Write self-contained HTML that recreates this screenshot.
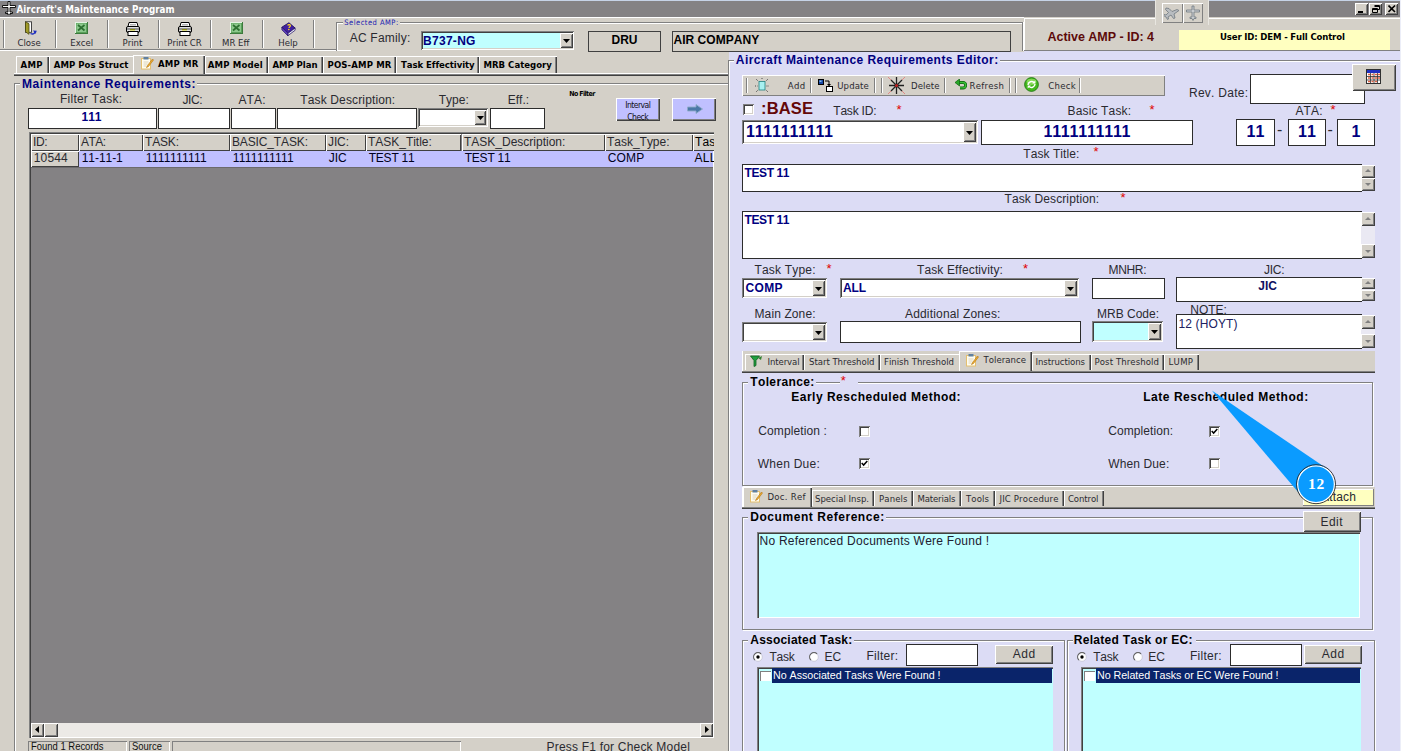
<!DOCTYPE html>
<html><head><meta charset="utf-8"><title>Aircraft's Maintenance Program</title>
<style>
html,body{margin:0;padding:0}
body{width:1401px;height:753px;position:relative;overflow:hidden;background:#d4d0c8;font-family:"Liberation Sans",sans-serif;font-size:12px;color:#000;font-kerning:none}
body div,body span,body svg{position:absolute;box-sizing:border-box}
.t{white-space:pre;font-family:"Liberation Sans",sans-serif}
.d{font-family:"DejaVu Sans Condensed","DejaVu Sans","Liberation Sans",sans-serif}
.grp{border:1px solid #808080;box-shadow:inset 1px 1px #fff,1px 1px #fff}
.sunk{box-shadow:inset 1px 1px #808080,inset -1px -1px #fff,inset 2px 2px #404040,inset -2px -2px #d4d0c8;background:#fff}
.rais{box-shadow:inset 1px 1px #fff,inset -1px -1px #404040,inset 2px 2px #d4d0c8,inset -2px -2px #808080;background:#d4d0c8}
.rais1{box-shadow:inset 1px 1px #fff,inset -1px -1px #808080;background:#d4d0c8}
.sunk1{box-shadow:inset 1px 1px #808080,inset -1px -1px #fff}
.flat{border:1px solid #2c2c2c;background:#fff}
.tab{background:#d4d0c8;box-shadow:inset 1px 1px #fff,inset -1px 0 #404040,inset -2px 0 #808080}
</style></head><body>
<div style="left:0px;top:0px;width:1401px;height:17px;background:#848284"></div>
<div style="left:0px;top:0px;width:1401px;height:1px;background:#c6d3e7"></div>
<svg style="left:2px;top:1px" width="14" height="14" viewBox="0 0 14 14"><path d="M6 0.5h2v4h5.5v2H8v4.5h2.5v1.5H8V14H6v-1.5H3.5V11H6V6.5H0.5v-2H6z" fill="#fff" stroke="#000" stroke-width="0.9"/></svg>
<span class="t d" style="left:16.5px;letter-spacing:0.05px;top:4.5px;font-size:9.7px;line-height:9.7px;font-weight:bold;color:#fff;">Aircraft's Maintenance Program</span>
<div style="left:0px;top:17px;width:1024px;height:1px;background:#fff"></div>
<div style="left:0px;top:49px;width:337px;height:1px;background:#808080"></div>
<div style="left:0px;top:50px;width:351px;height:1px;background:#fff"></div>
<div style="left:3px;top:20px;width:1px;height:28px;background:#808080"></div>
<div style="left:4px;top:20px;width:1px;height:28px;background:#fff"></div>
<div style="left:55px;top:20px;width:1px;height:28px;background:#808080"></div>
<div style="left:56px;top:20px;width:1px;height:28px;background:#fff"></div>
<div style="left:107px;top:20px;width:1px;height:28px;background:#808080"></div>
<div style="left:108px;top:20px;width:1px;height:28px;background:#fff"></div>
<div style="left:158px;top:20px;width:1px;height:28px;background:#808080"></div>
<div style="left:159px;top:20px;width:1px;height:28px;background:#fff"></div>
<div style="left:210px;top:20px;width:1px;height:28px;background:#808080"></div>
<div style="left:211px;top:20px;width:1px;height:28px;background:#fff"></div>
<div style="left:262px;top:20px;width:1px;height:28px;background:#808080"></div>
<div style="left:263px;top:20px;width:1px;height:28px;background:#fff"></div>
<div style="left:313px;top:20px;width:1px;height:28px;background:#808080"></div>
<div style="left:314px;top:20px;width:1px;height:28px;background:#fff"></div>
<span class="t d" style="left:17.5px;top:38.25px;font-size:9.5px;line-height:9.5px;color:#2a2a30;">Close</span>
<span class="t d" style="left:70.25px;top:38.25px;font-size:9.5px;line-height:9.5px;color:#2a2a30;">Excel</span>
<span class="t d" style="left:122.5px;top:38.25px;font-size:9.5px;line-height:9.5px;color:#2a2a30;">Print</span>
<span class="t d" style="left:167.25px;top:38.25px;font-size:9.5px;line-height:9.5px;color:#2a2a30;">Print CR</span>
<span class="t d" style="left:222.0px;top:38.25px;font-size:9.5px;line-height:9.5px;color:#2a2a30;">MR Eff</span>
<span class="t d" style="left:278.25px;top:38.25px;font-size:9.5px;line-height:9.5px;color:#2a2a30;">Help</span>
<svg style="left:23px;top:21px" width="15" height="16" viewBox="0 0 15 16"><rect x="2.500" y="0.800" width="6" height="10.500" fill="#fff" stroke="#303030" stroke-width="0.900"/><path d="M2.500 0.800l3.500 2v10.500l-3.500-2.500z" fill="#a09a28" stroke="#4a4810" stroke-width="0.800"/><path d="M7.500 12.500q3.500 1.500 4.500-1.500" stroke="#2030c0" stroke-width="1.300" fill="none"/><path d="M10 9.500l3.800 .3-1.300 3.200z" fill="#2030c0"/></svg>
<svg style="left:75px;top:22px" width="13" height="12" viewBox="0 0 13 12"><rect x="0" y="0" width="13" height="12" fill="#3c7a3c"/><rect x="0" y="0" width="12" height="11" fill="#e4f4e4"/><rect x="1" y="1" width="11" height="10" fill="#5aa05a"/><rect x="1.500" y="1.500" width="9.500" height="8.500" fill="#8cc88c"/><path d="M3 3l6.500 5.500M9.500 3L3 8.500" stroke="#2c7030" stroke-width="1.700"/></svg>
<svg style="left:230px;top:22px" width="13" height="12" viewBox="0 0 13 12"><rect x="0" y="0" width="13" height="12" fill="#3c7a3c"/><rect x="0" y="0" width="12" height="11" fill="#e4f4e4"/><rect x="1" y="1" width="11" height="10" fill="#5aa05a"/><rect x="1.500" y="1.500" width="9.500" height="8.500" fill="#8cc88c"/><path d="M3 3l6.500 5.500M9.500 3L3 8.500" stroke="#2c7030" stroke-width="1.700"/></svg>
<svg style="left:125px;top:21px" width="16" height="16" viewBox="0 0 16 16"><path d="M4 1.500h8l1 4H3z" fill="#fff" stroke="#000"/><path d="M5 3.500h6M5 5h6" stroke="#808080" stroke-width="0.600"/><rect x="1.500" y="5.500" width="13" height="6" rx="1.500" fill="#e0e0e0" stroke="#000"/><rect x="3" y="10.500" width="10" height="4" fill="#fff" stroke="#000"/><rect x="5" y="8" width="5" height="1.500" fill="#d8d820"/><path d="M2 8h12" stroke="#000" stroke-width="0.700"/></svg>
<svg style="left:177px;top:21px" width="16" height="16" viewBox="0 0 16 16"><path d="M4 1.500h8l1 4H3z" fill="#fff" stroke="#000"/><path d="M5 3.500h6M5 5h6" stroke="#808080" stroke-width="0.600"/><rect x="1.500" y="5.500" width="13" height="6" rx="1.500" fill="#e0e0e0" stroke="#000"/><rect x="3" y="10.500" width="10" height="4" fill="#fff" stroke="#000"/><rect x="5" y="8" width="5" height="1.500" fill="#d8d820"/><path d="M2 8h12" stroke="#000" stroke-width="0.700"/></svg>
<svg style="left:280.500px;top:21px" width="15" height="15" viewBox="0 0 17 17"><path d="M1 7l8-5 7 6-8 6z" fill="#4020a0" stroke="#201060"/><path d="M1 7v3l7 7v-3z" fill="#6040c0" stroke="#201060" stroke-width="0.800"/><path d="M8 14l8-6v2.500l-8 6z" fill="#e8e8f8" stroke="#201060" stroke-width="0.800"/><path d="M7.500 5c1-1.500 3.500-1 3 .8-.3 1-1.300 1-1.500 2" stroke="#ffd820" stroke-width="1.400" fill="none"/><circle cx="8.800" cy="9.600" r="0.900" fill="#ffd820"/></svg>
<div style="left:336px;top:22px;width:1px;height:29px;background:#808080"></div>
<div style="left:337px;top:23px;width:1px;height:27px;background:#fff"></div>
<div style="left:336px;top:22px;width:688px;height:1px;background:#808080"></div>
<div style="left:337px;top:23px;width:686px;height:1px;background:#fff"></div>
<div style="left:1022px;top:22px;width:1px;height:29px;background:#808080"></div>
<div style="left:1023px;top:22px;width:1px;height:29px;background:#fff"></div>
<div style="left:343px;top:19px;width:57px;height:8px;background:#d4d0c8"></div>
<span class="t d" style="left:344.25px;letter-spacing:0.48px;top:19.25px;font-size:7.5px;line-height:7.5px;color:#1818b0;">Selected AMP:</span>
<span class="t" style="left:349.75px;letter-spacing:0.2px;top:31.75px;font-size:12px;line-height:12px;color:#2a2a30;">AC Family:</span>
<div class="sunk" style="left:421px;top:31px;width:153px;height:19px;background:#c0ffff"></div>
<span class="t" style="left:423.0px;letter-spacing:0.29px;top:34.5px;font-size:12px;line-height:12px;font-weight:bold;color:#000080;">B737-NG</span>
<div class="rais" style="left:560px;top:33px;width:13px;height:15px;"></div>
<svg style="left:563px;top:39px" width="7" height="4" viewBox="0 0 7 4"><path d="M0 0h7L3.500 4z" fill="#000"/></svg>
<div style="left:588px;top:31px;width:73px;height:21px;border:1px solid #404040;background:#d4d0c8"></div>
<span class="t" style="left:611.5px;top:33.5px;font-size:12px;line-height:12px;font-weight:bold;">DRU</span>
<div style="left:672px;top:31px;width:339px;height:21px;border:1px solid #404040;background:#d4d0c8"></div>
<span class="t" style="left:673.5px;letter-spacing:0.03px;top:33.5px;font-size:12px;line-height:12px;font-weight:bold;">AIR COMPANY</span>
<div style="left:1024px;top:18px;width:1px;height:32px;background:#fff"></div>
<div style="left:1024px;top:18px;width:377px;height:1px;background:#fff"></div>
<div style="left:1024px;top:50px;width:377px;height:1px;background:#808080"></div>
<span class="t" style="left:1047.5px;letter-spacing:-0.03px;top:30.75px;font-size:12.5px;line-height:12.5px;font-weight:bold;color:#5c0a0a;">Active AMP - ID: 4</span>
<div style="left:1179px;top:30px;width:211px;height:20px;background:#ffffc0"></div>
<span class="t d" style="left:1220.0px;letter-spacing:-0.15px;top:31.75px;font-size:9.5px;line-height:9.5px;font-weight:bold;">User ID: DEM - Full Control</span>
<div style="left:1155px;top:0px;width:54px;height:25px;background:#d4d0c8;box-shadow:inset 1px 0 #e8e6e0,inset -1px 0 #e8e6e0"></div>
<div class="rais1" style="left:1162px;top:3px;width:21px;height:20px;"></div>
<div class="rais1" style="left:1183px;top:3px;width:20px;height:20px;"></div>
<svg style="left:1164px;top:5px" width="17" height="16" viewBox="0 0 17 16"><path d="M2 3l3 .5 3 3 5-2 2 1-5 3.5 1 4-1.5.5-2.5-3.5-3 2 .5 2-1 .5-1.5-2.500-2.500-1.500.5-1 2 .5 2.500-2.500-3-3z" fill="#b8bcc0" stroke="#707880" stroke-width="0.8"/></svg>
<svg style="left:1185px;top:5px" width="16" height="16" viewBox="0 0 16 16"><path d="M7 1h2v4h5.5v2H9v5h2v1.500H9l-1 2-1-2H5V12h2V7H1.5V5H7z" fill="#c8ccd0" stroke="#707880" stroke-width="0.8"/></svg>
<div class="rais" style="left:1355px;top:3px;width:13px;height:12px;"></div>
<div class="rais" style="left:1369px;top:3px;width:13px;height:12px;"></div>
<div class="rais" style="left:1385px;top:3px;width:13px;height:12px;"></div>
<div style="left:1358px;top:11px;width:5px;height:2px;background:#000"></div>
<svg style="left:1371px;top:4px" width="10" height="10" viewBox="0 0 10 10"><path d="M3.5 1.500h5v4h-1.500M3.500 2.500h5" stroke="#000" fill="none"/><path d="M1.500 4.500h5v4h-5zM1.500 5.500h5" stroke="#000" fill="none"/></svg>
<svg style="left:1388px;top:5px" width="8" height="8" viewBox="0 0 8 8"><path d="M0.500 0.500l6.500 6.500M7 0.500L0.500 7" stroke="#000" stroke-width="1.600" fill="none"/></svg>
<div style="left:14px;top:73px;width:715px;height:1px;background:#fff"></div>
<div style="left:14px;top:74px;width:715px;height:1px;background:#808080"></div>
<div style="left:14px;top:75px;width:715px;height:1px;background:#404040"></div>
<div class="tab" style="left:16px;top:56px;width:33px;height:17px;"></div>
<span class="t d" style="left:20.5px;letter-spacing:0.3px;top:60.0px;font-size:9.5px;line-height:9.5px;font-weight:bold;">AMP</span>
<div class="tab" style="left:49px;top:56px;width:84px;height:17px;"></div>
<span class="t d" style="left:53.75px;letter-spacing:0.03px;top:60.0px;font-size:9.5px;line-height:9.5px;font-weight:bold;">AMP Pos Struct</span>
<div class="tab" style="left:205px;top:56px;width:63px;height:17px;"></div>
<span class="t d" style="left:207.75px;letter-spacing:0.16px;top:60.0px;font-size:9.5px;line-height:9.5px;font-weight:bold;">AMP Model</span>
<div class="tab" style="left:268px;top:56px;width:55px;height:17px;"></div>
<span class="t d" style="left:272.5px;letter-spacing:-0.06px;top:60.0px;font-size:9.5px;line-height:9.5px;font-weight:bold;">AMP Plan</span>
<div class="tab" style="left:323px;top:56px;width:73px;height:17px;"></div>
<span class="t d" style="left:327.5px;letter-spacing:0.13px;top:60.0px;font-size:9.5px;line-height:9.5px;font-weight:bold;">POS-AMP MR</span>
<div class="tab" style="left:396px;top:56px;width:83px;height:17px;"></div>
<span class="t d" style="left:401.0px;letter-spacing:-0.07px;top:60.0px;font-size:9.5px;line-height:9.5px;font-weight:bold;">Task Effectivity</span>
<div class="tab" style="left:479px;top:56px;width:78px;height:17px;"></div>
<span class="t d" style="left:483.5px;letter-spacing:0.01px;top:60.0px;font-size:9.5px;line-height:9.5px;font-weight:bold;">MRB Category</span>
<div style="left:131px;top:57px;width:2px;height:16px;background:#d4d0c8"></div>
<div class="tab" style="left:133px;top:55px;width:72px;height:19px;"></div>
<span class="t d" style="left:158.0px;letter-spacing:0.17px;top:58.5px;font-size:9.5px;line-height:9.5px;font-weight:bold;">AMP MR</span>
<div style="left:134px;top:73px;width:69px;height:1px;background:#d4d0c8"></div>
<svg style="left:140px;top:55.5px" width="14" height="14" viewBox="0 0 14 14"><rect x="1.500" y="2.500" width="9" height="10.500" fill="#fffdf0" stroke="#e4c070"/><rect x="3.500" y="1" width="5" height="2.500" fill="#6080a0"/><path d="M3.500 6h5M3.500 8h4M3.500 10h3" stroke="#d0c8b0" stroke-width="0.800"/><path d="M12.500 3l-5 6.500-1 2 2-1 5-6.500z" fill="#f0b030" stroke="#b07010" stroke-width="0.600"/></svg>
<div class="grp" style="left:14px;top:83px;width:715px;height:700px;"></div>
<div style="left:20px;top:78px;width:177px;height:12px;background:#d4d0c8"></div>
<span class="t" style="left:22.0px;letter-spacing:0.56px;top:77.5px;font-size:12px;line-height:12px;font-weight:bold;color:#000080;">Maintenance Requirements:</span>
<span class="t" style="left:60.0px;letter-spacing:0.24px;top:92.75px;font-size:12px;line-height:12px;color:#2a2a30;">Filter Task:</span>
<span class="t" style="left:182.5px;letter-spacing:-0.45px;top:94.25px;font-size:12px;line-height:12px;color:#2a2a30;">JIC:</span>
<span class="t" style="left:238.5px;letter-spacing:0.11px;top:94.25px;font-size:12px;line-height:12px;color:#2a2a30;">ATA:</span>
<span class="t" style="left:300.25px;letter-spacing:0.14px;top:94.25px;font-size:12px;line-height:12px;color:#2a2a30;">Task Description:</span>
<span class="t" style="left:438.75px;top:94.25px;font-size:12px;line-height:12px;color:#2a2a30;">Type:</span>
<span class="t" style="left:507.75px;letter-spacing:-0.01px;top:94.25px;font-size:12px;line-height:12px;color:#2a2a30;">Eff.:</span>
<div class="flat" style="left:28px;top:108px;width:129px;height:21px;"></div>
<span class="t" style="left:81.5px;top:110.5px;font-size:12px;line-height:12px;font-weight:bold;color:#000080;">111</span>
<div class="flat" style="left:158px;top:108px;width:72px;height:21px;"></div>
<div class="flat" style="left:231px;top:108px;width:45px;height:21px;"></div>
<div class="flat" style="left:277px;top:108px;width:140px;height:21px;"></div>
<div class="sunk" style="left:418px;top:108px;width:70px;height:19px;"></div>
<div class="rais" style="left:474px;top:110px;width:12px;height:15px;"></div>
<svg style="left:477px;top:116px" width="7" height="4" viewBox="0 0 7 4"><path d="M0 0h7L3.500 4z" fill="#000"/></svg>
<div class="flat" style="left:490px;top:108px;width:55px;height:21px;"></div>
<span class="t d" style="left:569.25px;letter-spacing:-0.6px;top:90.5px;font-size:7px;line-height:7px;font-weight:bold;">No Filter</span>
<div style="left:616px;top:98px;width:44px;height:23px;background:#c0c0ff;box-shadow:inset 1px 1px #fff,inset -1px -1px #404040,inset -2px -2px #808080"></div>
<span class="t d" style="left:625.25px;letter-spacing:-0.54px;top:101.25px;font-size:8.5px;line-height:8.5px;color:#101018;">Interval</span>
<span class="t d" style="left:627.25px;letter-spacing:-0.51px;top:112.5px;font-size:8.5px;line-height:8.5px;color:#101018;">Check</span>
<div style="left:672px;top:98px;width:44px;height:23px;background:#c0c0ff;box-shadow:inset 1px 1px #fff,inset -1px -1px #404040,inset -2px -2px #808080"></div>
<svg style="left:687px;top:104px" width="16" height="10" viewBox="0 0 16 10"><path d="M0.500 3h8.500V0.500l6.500 4.500-6.500 4.500V7H0.500z" fill="#4c78a8" stroke="#90acc8" stroke-width="0.900"/></svg>
<div style="left:29px;top:132px;width:685px;height:606px;background:#848284;box-shadow:inset 1px 1px #808080,inset 2px 2px #404040,inset -1px -1px #fff"></div>
<div style="left:31px;top:134px;width:48px;height:17px;background:#d4d0c8;box-shadow:inset 1px 1px #fff,inset -1px -1px #404040;"></div>
<div style="left:31px;top:151px;width:48px;height:16px;background:#d4d0c8;box-shadow:inset 1px 1px #fff,inset -1px -1px #404040"></div>
<div style="left:79px;top:134px;width:64px;height:17px;background:#d4d0c8;box-shadow:inset 1px 1px #fff,inset -1px -1px #404040;"></div>
<div style="left:79px;top:151px;width:65px;height:16px;background:#c0c0ff;"></div>
<div style="left:143px;top:134px;width:87px;height:17px;background:#d4d0c8;box-shadow:inset 1px 1px #fff,inset -1px -1px #404040;"></div>
<div style="left:143px;top:151px;width:88px;height:16px;background:#c0c0ff;"></div>
<div style="left:230px;top:134px;width:96px;height:17px;background:#d4d0c8;box-shadow:inset 1px 1px #fff,inset -1px -1px #404040;"></div>
<div style="left:230px;top:151px;width:97px;height:16px;background:#c0c0ff;"></div>
<div style="left:326px;top:134px;width:40px;height:17px;background:#d4d0c8;box-shadow:inset 1px 1px #fff,inset -1px -1px #404040;"></div>
<div style="left:326px;top:151px;width:41px;height:16px;background:#c0c0ff;"></div>
<div style="left:366px;top:134px;width:95px;height:17px;background:#d4d0c8;box-shadow:inset 1px 1px #fff,inset -1px -1px #404040;"></div>
<div style="left:366px;top:151px;width:96px;height:16px;background:#c0c0ff;"></div>
<div style="left:462px;top:134px;width:143px;height:17px;background:#d4d0c8;box-shadow:inset 1px 1px #fff,inset -1px -1px #404040;"></div>
<div style="left:462px;top:151px;width:144px;height:16px;background:#c0c0ff;"></div>
<div style="left:605px;top:134px;width:88px;height:17px;background:#d4d0c8;box-shadow:inset 1px 1px #fff,inset -1px -1px #404040;"></div>
<div style="left:605px;top:151px;width:89px;height:16px;background:#c0c0ff;"></div>
<div style="left:693px;top:134px;width:21px;height:17px;background:#d4d0c8;box-shadow:inset 1px 1px #fff,inset 0 -1px #404040;overflow:hidden;"></div>
<div style="left:693px;top:151px;width:20px;height:16px;background:#c0c0ff;"></div>
<span class="t" style="left:33.0px;letter-spacing:-0.42px;top:135.75px;font-size:12px;line-height:12px;color:#2a2a30;">ID:</span>
<span class="t" style="left:33.75px;letter-spacing:0.16px;top:152.0px;font-size:12px;line-height:12px;color:#2a2a30;">10544</span>
<span class="t" style="left:81.0px;letter-spacing:-0.56px;top:135.75px;font-size:12px;line-height:12px;color:#2a2a30;">ATA:</span>
<span class="t" style="left:81.75px;letter-spacing:-0.06px;top:152.0px;font-size:12px;line-height:12px;color:#000020;">11-11-1</span>
<span class="t" style="left:145.0px;letter-spacing:-0.17px;top:135.75px;font-size:12px;line-height:12px;color:#2a2a30;">TASK:</span>
<span class="t" style="left:145.75px;letter-spacing:-0.64px;top:152.0px;font-size:12px;line-height:12px;color:#000020;">1111111111</span>
<span class="t" style="left:232.0px;letter-spacing:-0.14px;top:135.75px;font-size:12px;line-height:12px;color:#2a2a30;">BASIC_TASK:</span>
<span class="t" style="left:232.75px;letter-spacing:-0.64px;top:152.0px;font-size:12px;line-height:12px;color:#000020;">1111111111</span>
<span class="t" style="left:328.0px;letter-spacing:-0.11px;top:135.75px;font-size:12px;line-height:12px;color:#2a2a30;">JIC:</span>
<span class="t" style="left:328.75px;top:152.0px;font-size:12px;line-height:12px;color:#000020;">JIC</span>
<span class="t" style="left:368.0px;letter-spacing:-0.02px;top:135.75px;font-size:12px;line-height:12px;color:#2a2a30;">TASK_Title:</span>
<span class="t" style="left:368.75px;letter-spacing:-0.23px;top:152.0px;font-size:12px;line-height:12px;color:#000020;">TEST 11</span>
<span class="t" style="left:464.0px;top:135.75px;font-size:12px;line-height:12px;color:#2a2a30;">TASK_Description:</span>
<span class="t" style="left:464.75px;letter-spacing:-0.23px;top:152.0px;font-size:12px;line-height:12px;color:#000020;">TEST 11</span>
<span class="t" style="left:607.0px;letter-spacing:-0.02px;top:135.75px;font-size:12px;line-height:12px;color:#2a2a30;">Task_Type:</span>
<span class="t" style="left:607.75px;letter-spacing:0.17px;top:152.0px;font-size:12px;line-height:12px;color:#000020;">COMP</span>
<div style="left:693px;top:134px;width:21px;height:33px;overflow:hidden;background:none"><span class="t" style="left:2px;top:1.850px;font-size:12px;line-height:12px;letter-spacing:0.1px">Task</span><span class="t" style="left:1.500px;top:18.100px;font-size:12px;line-height:12px;letter-spacing:0.3px">ALL</span></div>
<div style="left:31px;top:167px;width:682px;height:1px;background:#6c6a6c"></div>
<div style="left:31px;top:723px;width:682px;height:14px;background:#eceae6"></div>
<div class="rais" style="left:31px;top:723px;width:13px;height:14px;"></div>
<div class="rais" style="left:44px;top:723px;width:14px;height:14px;"></div>
<div class="rais" style="left:700px;top:723px;width:13px;height:14px;"></div>
<svg style="left:35px;top:726px" width="4" height="7" viewBox="0 0 4 7"><path d="M4 0v7L0 3.500z" fill="#000"/></svg>
<svg style="left:705px;top:726px" width="4" height="7" viewBox="0 0 4 7"><path d="M0 0v7l4-3.500z" fill="#000"/></svg>
<div class="sunk1" style="left:28px;top:741px;width:99px;height:14px;"></div>
<div class="sunk1" style="left:129px;top:741px;width:41px;height:14px;"></div>
<div class="sunk1" style="left:172px;top:741px;width:289px;height:14px;"></div>
<span class="t" style="left:30.5px;top:741.0px;font-size:10.5px;line-height:10.5px;color:#2a2a30;transform:scaleX(.9);transform-origin:0 0;color:#101010;">Found 1 Records</span>
<span class="t" style="left:132.0px;top:741.0px;font-size:10.5px;line-height:10.5px;color:#2a2a30;transform:scaleX(.9);transform-origin:0 0;color:#101010;">Source</span>
<span class="t" style="left:546.5px;letter-spacing:0.2px;top:741.25px;font-size:12px;line-height:12px;color:#2a2a30;">Press F1 for Check Model</span>
<div style="left:729px;top:52px;width:295px;height:701px;background:#dcdcf5"></div>
<div style="left:1024px;top:51px;width:377px;height:702px;background:#dcdcf5"></div>
<div class="grp" style="left:728px;top:60px;width:691px;height:720px;"></div>
<div style="left:734px;top:54px;width:266px;height:12px;background:#dcdcf5"></div>
<span class="t" style="left:735.75px;letter-spacing:0.46px;top:53.75px;font-size:12px;line-height:12px;font-weight:bold;color:#000080;">Aircraft Maintenance Requirements Editor:</span>
<div style="left:742px;top:75px;width:423px;height:21px;background:#d4d0c8;box-shadow:inset 1px 1px #fff,inset -1px -1px #808080"></div>
<div style="left:746px;top:78px;width:1px;height:15px;background:#808080"></div>
<div style="left:747px;top:78px;width:1px;height:15px;background:#fff"></div>
<div style="left:810px;top:78px;width:1px;height:15px;background:#808080"></div>
<div style="left:811px;top:78px;width:1px;height:15px;background:#fff"></div>
<div style="left:874px;top:78px;width:1px;height:15px;background:#808080"></div>
<div style="left:875px;top:78px;width:1px;height:15px;background:#fff"></div>
<div style="left:881px;top:78px;width:1px;height:15px;background:#808080"></div>
<div style="left:882px;top:78px;width:1px;height:15px;background:#fff"></div>
<div style="left:944px;top:78px;width:1px;height:15px;background:#808080"></div>
<div style="left:945px;top:78px;width:1px;height:15px;background:#fff"></div>
<div style="left:1009px;top:78px;width:1px;height:15px;background:#808080"></div>
<div style="left:1010px;top:78px;width:1px;height:15px;background:#fff"></div>
<div style="left:1015px;top:78px;width:1px;height:15px;background:#808080"></div>
<div style="left:1016px;top:78px;width:1px;height:15px;background:#fff"></div>
<div style="left:1079px;top:78px;width:1px;height:15px;background:#808080"></div>
<div style="left:1080px;top:78px;width:1px;height:15px;background:#fff"></div>
<span class="t d" style="left:787.75px;letter-spacing:0.4px;top:80.5px;font-size:9.5px;line-height:9.5px;color:#2a2a30;">Add</span>
<span class="t d" style="left:837.25px;letter-spacing:0.11px;top:80.5px;font-size:9.5px;line-height:9.5px;color:#2a2a30;">Update</span>
<span class="t d" style="left:911.0px;letter-spacing:0.08px;top:80.5px;font-size:9.5px;line-height:9.5px;color:#2a2a30;">Delete</span>
<span class="t d" style="left:969.5px;letter-spacing:0.27px;top:80.5px;font-size:9.5px;line-height:9.5px;color:#2a2a30;">Refresh</span>
<span class="t d" style="left:1048.25px;letter-spacing:0.3px;top:80.5px;font-size:9.5px;line-height:9.5px;color:#2a2a30;">Check</span>
<svg style="left:754px;top:78px" width="16" height="15" viewBox="0 0 16 15"><rect x="5" y="3.500" width="6" height="8.500" fill="#a8f0f0" stroke="#208080" stroke-width="0.800"/><path d="M2 1l2 2M14 1l-2 2M1 8h2.500M12.500 8H15M2 14l2-2M14 14l-2-2M8 0v2" stroke="#404040" stroke-width="0.900" stroke-dasharray="1 1"/></svg>
<svg style="left:818px;top:78px" width="15" height="15" viewBox="0 0 15 15"><rect x="0.500" y="1.500" width="5" height="5" fill="#1848a8" stroke="#000"/><rect x="1.500" y="2.500" width="2" height="1.500" fill="#80c0f0"/><rect x="8.500" y="8.500" width="6" height="5" fill="#fff" stroke="#000"/><path d="M7 3h4v4" stroke="#000" fill="none"/><path d="M9 6l2 2.500 2-2.500z" fill="#000"/></svg>
<svg style="left:887px;top:76px" width="19" height="19" viewBox="0 0 19 19"><path d="M1 1l17 17M18 1L1 18" stroke="#e85858" stroke-width="0.600"/><path d="M9.500 1v17M2 9.500h15M4 4l11 11M15 4L4 15" stroke="#202020" stroke-width="1.300"/><circle cx="9.500" cy="9.500" r="1.500" fill="#c02020"/></svg>
<svg style="left:955px;top:79px" width="12" height="11" viewBox="0 0 12 11"><path d="M3 3.500h5a2.700 2.700 0 0 1 0 5.400H5" stroke="#0c600c" stroke-width="3" fill="none"/><path d="M3 3.500h5a2.700 2.700 0 0 1 0 5.400H5" stroke="#38c038" stroke-width="1.400" fill="none"/><path d="M4.500 0v7L0 3.500z" fill="#28a828" stroke="#0c600c" stroke-width="0.700"/></svg>
<svg style="left:1023.500px;top:77.300px" width="15" height="15" viewBox="0 0 17 17"><circle cx="8.500" cy="8.500" r="7.800" fill="#44b81c" stroke="#1c7810"/><ellipse cx="8.500" cy="5.500" rx="5.500" ry="3.500" fill="#b4f080" opacity="0.550"/><path d="M4.500 9a4 4 0 0 1 7-2.500M12.500 8a4 4 0 0 1-7 2.500" stroke="#fff" stroke-width="1.600" fill="none"/><path d="M12.800 4v3.500H9.300zM4.200 13V9.500H7.700z" fill="#fff"/></svg>
<span class="t" style="left:1189.0px;letter-spacing:0.26px;top:86.75px;font-size:12px;line-height:12px;color:#2a2a30;">Rev. Date:</span>
<div class="flat" style="left:1250px;top:74px;width:115px;height:30px;"></div>
<div class="rais" style="left:1352px;top:64px;width:44px;height:27px;"></div>
<svg style="left:1366px;top:69px" width="15" height="15" viewBox="0 0 15 15"><rect x="0.500" y="0.500" width="14" height="14" fill="#fff" stroke="#303030"/><rect x="1" y="1" width="13" height="3" fill="#2030c0"/><path d="M1 7.500h13M1 11h13M4.500 4v10.500M8 4v10.500M11.500 4v10.500" stroke="#303030" stroke-width="0.800"/><path d="M2 5.500h2M5.500 5.500h2M9 5.500h2M12 5.500h2M2 9h2M5.500 9h2M9 9h2M12 9h2M2 12.500h2M5.500 12.500h2M9 12.500h2" stroke="#e06040" stroke-width="1.600"/></svg>
<div class="sunk" style="left:743px;top:104px;width:11px;height:11px;background:#fff"></div>
<span class="t" style="left:761.0px;letter-spacing:0.16px;top:100.0px;font-size:16.5px;line-height:16.5px;font-weight:bold;color:#640808;">:BASE</span>
<span class="t" style="left:833.25px;letter-spacing:-0.2px;top:104.75px;font-size:12px;line-height:12px;color:#2a2a30;">Task ID:</span>
<span class="t" style="left:896.5px;top:102.5px;font-size:13px;line-height:13px;color:#e00000;">*</span>
<span class="t" style="left:1067.5px;letter-spacing:0.15px;top:104.75px;font-size:12px;line-height:12px;color:#2a2a30;">Basic Task:</span>
<span class="t" style="left:1149.5px;top:102.5px;font-size:13px;line-height:13px;color:#e00000;">*</span>
<span class="t" style="left:1295.5px;letter-spacing:0.11px;top:104.75px;font-size:12px;line-height:12px;color:#2a2a30;">ATA:</span>
<span class="t" style="left:1330.5px;top:102.5px;font-size:13px;line-height:13px;color:#e00000;">*</span>
<div class="sunk" style="left:742px;top:120px;width:236px;height:24px;background:#fff"></div>
<div class="rais" style="left:963px;top:122px;width:13px;height:20px;"></div>
<svg style="left:966px;top:131px" width="7" height="4" viewBox="0 0 7 4"><path d="M0 0h7L3.500 4z" fill="#000"/></svg>
<span class="t" style="left:746.0px;letter-spacing:-0.22px;top:123.5px;font-size:16px;line-height:16px;font-weight:bold;color:#000080;">1111111111</span>
<div class="flat" style="left:981px;top:120px;width:212px;height:25px;"></div>
<span class="t" style="left:1043.5px;letter-spacing:-0.22px;top:123.5px;font-size:16px;line-height:16px;font-weight:bold;color:#000080;">1111111111</span>
<div class="flat" style="left:1236px;top:119px;width:39px;height:27px;"></div>
<div class="flat" style="left:1288px;top:119px;width:38px;height:27px;"></div>
<div class="flat" style="left:1337px;top:119px;width:38px;height:27px;"></div>
<span class="t" style="left:1246.5px;top:123.5px;font-size:16px;line-height:16px;font-weight:bold;color:#000080;">11</span>
<span class="t" style="left:1298.0px;top:123.5px;font-size:16px;line-height:16px;font-weight:bold;color:#000080;">11</span>
<span class="t" style="left:1351.5px;top:123.5px;font-size:16px;line-height:16px;font-weight:bold;color:#000080;">1</span>
<span class="t" style="left:1277.0px;top:121.5px;font-size:16px;line-height:16px;color:#2a2a30;">-</span>
<span class="t" style="left:1327.5px;top:121.5px;font-size:16px;line-height:16px;color:#2a2a30;">-</span>
<span class="t" style="left:1023.25px;letter-spacing:0.07px;top:147.5px;font-size:12px;line-height:12px;color:#2a2a30;">Task Title:</span>
<span class="t" style="left:1093.5px;top:145.0px;font-size:13px;line-height:13px;color:#e00000;">*</span>
<div class="flat" style="left:742px;top:164px;width:620px;height:28px;"></div>
<div style="left:1361px;top:165px;width:14px;height:26px;background:#eae9f3"></div>
<div class="rais" style="left:1361px;top:165px;width:14px;height:13px;"></div>
<div class="rais" style="left:1361px;top:178px;width:14px;height:13px;"></div>
<svg style="left:1365px;top:169px" width="6" height="3" viewBox="0 0 6 3"><path d="M0 3h6L3 0z" fill="#808080"/></svg>
<svg style="left:1365px;top:183px" width="6" height="3" viewBox="0 0 6 3"><path d="M0 0h6L3 3z" fill="#808080"/></svg>
<span class="t" style="left:744.5px;letter-spacing:-0.39px;top:167.25px;font-size:12px;line-height:12px;font-weight:bold;color:#000080;">TEST 11</span>
<span class="t" style="left:1004.5px;letter-spacing:0.12px;top:192.75px;font-size:12px;line-height:12px;color:#2a2a30;">Task Description:</span>
<span class="t" style="left:1120.5px;top:190.5px;font-size:13px;line-height:13px;color:#e00000;">*</span>
<div class="flat" style="left:742px;top:211px;width:620px;height:48px;"></div>
<div style="left:1361px;top:212px;width:14px;height:46px;background:#eae9f3"></div>
<div class="rais" style="left:1361px;top:212px;width:14px;height:14px;"></div>
<div class="rais" style="left:1361px;top:244px;width:14px;height:14px;"></div>
<svg style="left:1365px;top:217px" width="6" height="3" viewBox="0 0 6 3"><path d="M0 3h6L3 0z" fill="#808080"/></svg>
<svg style="left:1365px;top:250px" width="6" height="3" viewBox="0 0 6 3"><path d="M0 0h6L3 3z" fill="#808080"/></svg>
<span class="t" style="left:744.5px;letter-spacing:-0.39px;top:214.25px;font-size:12px;line-height:12px;font-weight:bold;color:#000080;">TEST 11</span>
<span class="t" style="left:754.5px;letter-spacing:0.18px;top:264.25px;font-size:12px;line-height:12px;color:#2a2a30;">Task Type:</span>
<span class="t" style="left:826.5px;top:262.0px;font-size:13px;line-height:13px;color:#e00000;">*</span>
<div class="sunk" style="left:742px;top:278px;width:85px;height:20px;background:#fff"></div>
<div class="rais" style="left:812px;top:280px;width:13px;height:16px;"></div>
<svg style="left:815px;top:287px" width="7" height="4" viewBox="0 0 7 4"><path d="M0 0h7L3.500 4z" fill="#000"/></svg>
<span class="t" style="left:745.5px;letter-spacing:0.33px;top:282.0px;font-size:12px;line-height:12px;font-weight:bold;color:#000080;">COMP</span>
<span class="t" style="left:917.0px;letter-spacing:0.12px;top:264.25px;font-size:12px;line-height:12px;color:#2a2a30;">Task Effectivity:</span>
<span class="t" style="left:1023.0px;top:262.0px;font-size:13px;line-height:13px;color:#e00000;">*</span>
<div class="sunk" style="left:840px;top:278px;width:239px;height:20px;background:#fff"></div>
<div class="rais" style="left:1064px;top:280px;width:13px;height:16px;"></div>
<svg style="left:1067px;top:287px" width="7" height="4" viewBox="0 0 7 4"><path d="M0 0h7L3.500 4z" fill="#000"/></svg>
<span class="t" style="left:843.0px;letter-spacing:-0.16px;top:282.0px;font-size:12px;line-height:12px;font-weight:bold;color:#000080;">ALL</span>
<span class="t" style="left:1108.5px;letter-spacing:-0.33px;top:264.25px;font-size:12px;line-height:12px;color:#2a2a30;">MNHR:</span>
<div class="flat" style="left:1092px;top:278px;width:73px;height:21px;"></div>
<span class="t" style="left:1264.0px;letter-spacing:-0.28px;top:264.25px;font-size:12px;line-height:12px;color:#2a2a30;">JIC:</span>
<div class="flat" style="left:1176px;top:277px;width:186px;height:25px;"></div>
<div style="left:1361px;top:278px;width:14px;height:23px;background:#eae9f3"></div>
<div class="rais" style="left:1361px;top:278px;width:14px;height:11px;"></div>
<div class="rais" style="left:1361px;top:290px;width:14px;height:11px;"></div>
<svg style="left:1365px;top:281px" width="6" height="3" viewBox="0 0 6 3"><path d="M0 3h6L3 0z" fill="#808080"/></svg>
<svg style="left:1365px;top:294px" width="6" height="3" viewBox="0 0 6 3"><path d="M0 0h6L3 3z" fill="#808080"/></svg>
<span class="t" style="left:1258.25px;top:280.25px;font-size:12px;line-height:12px;font-weight:bold;color:#101060;">JIC</span>
<span class="t" style="left:754.5px;letter-spacing:0.11px;top:307.75px;font-size:12px;line-height:12px;color:#2a2a30;">Main Zone:</span>
<div class="sunk" style="left:742px;top:322px;width:85px;height:20px;background:#fff"></div>
<div class="rais" style="left:812px;top:324px;width:13px;height:16px;"></div>
<svg style="left:815px;top:331px" width="7" height="4" viewBox="0 0 7 4"><path d="M0 0h7L3.500 4z" fill="#000"/></svg>
<span class="t" style="left:905.0px;letter-spacing:0.17px;top:307.75px;font-size:12px;line-height:12px;color:#2a2a30;">Additional Zones:</span>
<div class="flat" style="left:840px;top:321px;width:241px;height:22px;"></div>
<span class="t" style="left:1097.0px;top:307.75px;font-size:12px;line-height:12px;color:#2a2a30;">MRB Code:</span>
<div class="sunk" style="left:1092px;top:321px;width:71px;height:21px;background:#c0ffff"></div>
<div class="rais" style="left:1148px;top:323px;width:13px;height:17px;"></div>
<svg style="left:1151px;top:330px" width="7" height="4" viewBox="0 0 7 4"><path d="M0 0h7L3.500 4z" fill="#000"/></svg>
<span class="t" style="left:1190.25px;letter-spacing:-0.04px;top:303.5px;font-size:12px;line-height:12px;color:#2a2a30;">NOTE:</span>
<div class="flat" style="left:1176px;top:314px;width:186px;height:35px;"></div>
<div style="left:1361px;top:315px;width:14px;height:33px;background:#eae9f3"></div>
<div class="rais" style="left:1361px;top:315px;width:14px;height:14px;"></div>
<div class="rais" style="left:1361px;top:334px;width:14px;height:14px;"></div>
<svg style="left:1365px;top:320px" width="6" height="3" viewBox="0 0 6 3"><path d="M0 3h6L3 0z" fill="#808080"/></svg>
<svg style="left:1365px;top:340px" width="6" height="3" viewBox="0 0 6 3"><path d="M0 0h6L3 3z" fill="#808080"/></svg>
<span class="t" style="left:1178.5px;letter-spacing:0.12px;top:318.0px;font-size:12px;line-height:12px;color:#202060;">12 (HOYT)</span>
<div style="left:742px;top:351px;width:633px;height:22px;background:#d4d0c8;box-shadow:inset 0 -1px #404040,inset 0 -2px #808080,inset 1px 0 #fff"></div>
<div class="tab" style="left:745px;top:354px;width:59px;height:16px;"></div>
<span class="t d" style="left:767.5px;letter-spacing:-0.1px;top:357.0px;font-size:9.5px;line-height:9.5px;color:#2a2a30;">Interval</span>
<div class="tab" style="left:804px;top:354px;width:76px;height:16px;"></div>
<span class="t d" style="left:809.0px;letter-spacing:-0.03px;top:357.0px;font-size:9.5px;line-height:9.5px;color:#2a2a30;">Start Threshold</span>
<div class="tab" style="left:880px;top:354px;width:79px;height:16px;"></div>
<span class="t d" style="left:884.0px;top:357.0px;font-size:9.5px;line-height:9.5px;color:#2a2a30;">Finish Threshold</span>
<div class="tab" style="left:1032px;top:354px;width:59px;height:16px;"></div>
<span class="t d" style="left:1035.5px;letter-spacing:-0.06px;top:357.0px;font-size:9.5px;line-height:9.5px;color:#2a2a30;">Instructions</span>
<div class="tab" style="left:1091px;top:354px;width:73px;height:16px;"></div>
<span class="t d" style="left:1094.5px;letter-spacing:0.1px;top:357.0px;font-size:9.5px;line-height:9.5px;color:#2a2a30;">Post Threshold</span>
<div class="tab" style="left:1164px;top:354px;width:35px;height:16px;"></div>
<span class="t d" style="left:1168.5px;letter-spacing:0.32px;top:357.0px;font-size:9.5px;line-height:9.5px;color:#2a2a30;">LUMP</span>
<div style="left:957px;top:355px;width:2px;height:15px;background:#d4d0c8"></div>
<div class="tab" style="left:959px;top:351px;width:73px;height:20px;"></div>
<span class="t d" style="left:983.5px;letter-spacing:0.04px;top:355.25px;font-size:9.5px;line-height:9.5px;color:#2a2a30;">Tolerance</span>
<svg style="left:965px;top:353px" width="14" height="14" viewBox="0 0 14 14"><rect x="1.500" y="2.500" width="9" height="10.500" fill="#fffdf0" stroke="#e4c070"/><rect x="3.500" y="1" width="5" height="2.500" fill="#6080a0"/><path d="M3.500 6h5M3.500 8h4M3.500 10h3" stroke="#d0c8b0" stroke-width="0.800"/><path d="M12.500 3l-5 6.500-1 2 2-1 5-6.500z" fill="#f0b030" stroke="#b07010" stroke-width="0.600"/></svg>
<svg style="left:750px;top:355px" width="13" height="12" viewBox="0 0 13 12"><path d="M0.500 1h9l-3.500 4.500v5l-2 1v-6z" fill="#20a040" stroke="#106020" stroke-width="0.800"/><path d="M8 3l4-2-1 4z" fill="#308030"/></svg>
<div class="grp" style="left:742px;top:382px;width:631px;height:104px;"></div>
<div style="left:748px;top:376px;width:68px;height:12px;background:#dcdcf5"></div>
<div style="left:840px;top:380px;width:18px;height:5px;background:#dcdcf5"></div>
<span class="t" style="left:750.25px;letter-spacing:0.37px;top:375.75px;font-size:12px;line-height:12px;font-weight:bold;">Tolerance:</span>
<span class="t" style="left:840.75px;top:374.0px;font-size:13px;line-height:13px;color:#e00000;">*</span>
<span class="t" style="left:791.25px;letter-spacing:0.5px;top:391.0px;font-size:12px;line-height:12px;font-weight:bold;">Early Rescheduled Method:</span>
<span class="t" style="left:1143.25px;letter-spacing:0.53px;top:391.0px;font-size:12px;line-height:12px;font-weight:bold;">Late Rescheduled Method:</span>
<span class="t" style="left:758.25px;letter-spacing:0.1px;top:424.75px;font-size:12px;line-height:12px;color:#2a2a30;">Completion :</span>
<span class="t" style="left:1108.25px;letter-spacing:0.08px;top:424.75px;font-size:12px;line-height:12px;color:#2a2a30;">Completion:</span>
<span class="t" style="left:757.75px;letter-spacing:0.25px;top:457.75px;font-size:12px;line-height:12px;color:#2a2a30;">When Due:</span>
<span class="t" style="left:1108.25px;letter-spacing:0.12px;top:457.75px;font-size:12px;line-height:12px;color:#2a2a30;">When Due:</span>
<div class="sunk" style="left:859px;top:426px;width:11px;height:11px;background:#fff"></div>
<div class="sunk" style="left:1209px;top:426px;width:11px;height:11px;background:#fff"></div>
<svg style="left:1211px;top:428px" width="7" height="7" viewBox="0 0 8 8"><path d="M0.800 3.500L3 5.800 7.200 1.200" stroke="#000" stroke-width="1.700" fill="none"/></svg>
<div class="sunk" style="left:859px;top:458px;width:11px;height:11px;background:#fff"></div>
<svg style="left:861px;top:460px" width="7" height="7" viewBox="0 0 8 8"><path d="M0.800 3.500L3 5.800 7.200 1.200" stroke="#000" stroke-width="1.700" fill="none"/></svg>
<div class="sunk" style="left:1209px;top:458px;width:11px;height:11px;background:#fff"></div>
<div style="left:742px;top:487px;width:633px;height:22px;background:#d4d0c8;box-shadow:inset 0 -1px #404040,inset 0 -2px #808080,inset 1px 0 #fff"></div>
<div class="tab" style="left:812px;top:490px;width:62px;height:16px;"></div>
<span class="t d" style="left:815.0px;top:493.5px;font-size:9.5px;line-height:9.5px;color:#2a2a30;">Special Insp.</span>
<div class="tab" style="left:874px;top:490px;width:39px;height:16px;"></div>
<span class="t d" style="left:879.0px;letter-spacing:0.12px;top:493.5px;font-size:9.5px;line-height:9.5px;color:#2a2a30;">Panels</span>
<div class="tab" style="left:913px;top:490px;width:48px;height:16px;"></div>
<span class="t d" style="left:917.5px;letter-spacing:-0.15px;top:493.5px;font-size:9.5px;line-height:9.5px;color:#2a2a30;">Materials</span>
<div class="tab" style="left:961px;top:490px;width:34px;height:16px;"></div>
<span class="t d" style="left:966.0px;letter-spacing:0.12px;top:493.5px;font-size:9.5px;line-height:9.5px;color:#2a2a30;">Tools</span>
<div class="tab" style="left:995px;top:490px;width:69px;height:16px;"></div>
<span class="t d" style="left:999.5px;letter-spacing:0.15px;top:493.5px;font-size:9.5px;line-height:9.5px;color:#2a2a30;">JIC Procedure</span>
<div class="tab" style="left:1064px;top:490px;width:40px;height:16px;"></div>
<span class="t d" style="left:1068.0px;letter-spacing:-0.1px;top:493.5px;font-size:9.5px;line-height:9.5px;color:#2a2a30;">Control</span>
<div class="tab" style="left:743px;top:487px;width:69px;height:20px;"></div>
<span class="t d" style="left:767.5px;letter-spacing:0.27px;top:491.75px;font-size:9.5px;line-height:9.5px;color:#2a2a30;">Doc. Ref</span>
<svg style="left:749px;top:489px" width="14" height="14" viewBox="0 0 14 14"><rect x="1.500" y="2.500" width="9" height="10.500" fill="#fffdf0" stroke="#e4c070"/><rect x="3.500" y="1" width="5" height="2.500" fill="#6080a0"/><path d="M3.500 6h5M3.500 8h4M3.500 10h3" stroke="#d0c8b0" stroke-width="0.800"/><path d="M12.500 3l-5 6.500-1 2 2-1 5-6.500z" fill="#f0b030" stroke="#b07010" stroke-width="0.600"/></svg>
<div style="left:1303px;top:489px;width:71px;height:17px;background:#ffffc0;box-shadow:inset -1px -1px #808080,inset 1px 1px #fff"></div>
<span class="t" style="left:1321.0px;letter-spacing:0.19px;top:490.75px;font-size:12px;line-height:12px;color:#2a2a30;">Attach</span>
<div class="grp" style="left:742px;top:517px;width:631px;height:113px;"></div>
<div style="left:748px;top:511px;width:138px;height:12px;background:#dcdcf5"></div>
<span class="t" style="left:750.25px;letter-spacing:0.55px;top:511.25px;font-size:12px;line-height:12px;font-weight:bold;">Document Reference:</span>
<div class="rais" style="left:1303px;top:511px;width:58px;height:21px;"></div>
<span class="t" style="left:1320.5px;letter-spacing:0.44px;top:515.75px;font-size:12px;line-height:12px;color:#2a2a30;">Edit</span>
<div style="left:757px;top:532px;width:603px;height:86px;background:#c0ffff;box-shadow:inset 1px 1px #808080,inset 2px 2px #404040,inset -1px -1px #fff"></div>
<span class="t" style="left:759.5px;letter-spacing:0.25px;top:535.25px;font-size:12px;line-height:12px;color:#202030;">No Referenced Documents Were Found !</span>
<div class="grp" style="left:742px;top:640px;width:323px;height:140px;"></div>
<div style="left:748px;top:634px;width:106px;height:12px;background:#dcdcf5"></div>
<span class="t" style="left:750.25px;letter-spacing:0.22px;top:634.0px;font-size:12px;line-height:12px;font-weight:bold;">Associated Task:</span>
<svg style="left:753px;top:651.500px" width="10" height="10" viewBox="0 0 10 10"><circle cx="5" cy="5" r="4.300" fill="#fff" stroke="#c8c8d8" stroke-width="0.900"/><path d="M1.900 8.100A4.300 4.300 0 0 1 8.100 1.900" stroke="#606060" fill="none" stroke-width="1.100"/><circle cx="5" cy="5" r="1.700" fill="#000"/></svg>
<svg style="left:809px;top:651.500px" width="10" height="10" viewBox="0 0 10 10"><circle cx="5" cy="5" r="4.300" fill="#fff" stroke="#c8c8d8" stroke-width="0.900"/><path d="M1.900 8.100A4.300 4.300 0 0 1 8.100 1.900" stroke="#606060" fill="none" stroke-width="1.100"/></svg>
<span class="t" style="left:769.5px;letter-spacing:-0.27px;top:651.25px;font-size:12px;line-height:12px;color:#2a2a30;">Task</span>
<span class="t" style="left:824.5px;letter-spacing:0.03px;top:651.25px;font-size:12px;line-height:12px;color:#2a2a30;">EC</span>
<span class="t" style="left:866.5px;letter-spacing:0.25px;top:649.75px;font-size:12px;line-height:12px;color:#2a2a30;">Filter:</span>
<div class="flat" style="left:906px;top:644px;width:72px;height:22px;"></div>
<div class="rais" style="left:995px;top:645px;width:58px;height:19px;"></div>
<span class="t" style="left:1012.75px;letter-spacing:0.57px;top:648.25px;font-size:12px;line-height:12px;color:#2a2a30;">Add</span>
<div style="left:757px;top:667px;width:296px;height:100px;background:#c0ffff;box-shadow:inset 1px 1px #808080,inset 2px 2px #404040"></div>
<div style="left:772px;top:668px;width:280px;height:15px;background:#0a246a"></div>
<div style="left:760px;top:671px;width:11px;height:10px;background:#fff;box-shadow:inset 1px 1px #808080"></div>
<span class="t" style="left:773.0px;letter-spacing:-0.02px;top:669.75px;font-size:10.7px;line-height:10.7px;color:#fff;">No Associated Tasks Were Found !</span>
<div class="grp" style="left:1067px;top:640px;width:308px;height:140px;"></div>
<div style="left:1073px;top:634px;width:122.7px;height:12px;background:#dcdcf5"></div>
<span class="t" style="left:1073.75px;letter-spacing:0.3px;top:634.0px;font-size:12px;line-height:12px;font-weight:bold;">Related Task or EC:</span>
<svg style="left:1077px;top:651.500px" width="10" height="10" viewBox="0 0 10 10"><circle cx="5" cy="5" r="4.300" fill="#fff" stroke="#c8c8d8" stroke-width="0.900"/><path d="M1.900 8.100A4.300 4.300 0 0 1 8.100 1.900" stroke="#606060" fill="none" stroke-width="1.100"/><circle cx="5" cy="5" r="1.700" fill="#000"/></svg>
<svg style="left:1133px;top:651.500px" width="10" height="10" viewBox="0 0 10 10"><circle cx="5" cy="5" r="4.300" fill="#fff" stroke="#c8c8d8" stroke-width="0.900"/><path d="M1.900 8.100A4.300 4.300 0 0 1 8.100 1.900" stroke="#606060" fill="none" stroke-width="1.100"/></svg>
<span class="t" style="left:1093.25px;letter-spacing:-0.27px;top:651.25px;font-size:12px;line-height:12px;color:#2a2a30;">Task</span>
<span class="t" style="left:1148.25px;letter-spacing:0.03px;top:651.25px;font-size:12px;line-height:12px;color:#2a2a30;">EC</span>
<span class="t" style="left:1190.0px;letter-spacing:0.25px;top:649.75px;font-size:12px;line-height:12px;color:#2a2a30;">Filter:</span>
<div class="flat" style="left:1230px;top:644px;width:72px;height:22px;"></div>
<div class="rais" style="left:1304px;top:645px;width:58px;height:19px;"></div>
<span class="t" style="left:1321.75px;letter-spacing:0.57px;top:648.25px;font-size:12px;line-height:12px;color:#2a2a30;">Add</span>
<div style="left:1081px;top:667px;width:280px;height:100px;background:#c0ffff;box-shadow:inset 1px 1px #808080,inset 2px 2px #404040"></div>
<div style="left:1096px;top:668px;width:264px;height:15px;background:#0a246a"></div>
<div style="left:1084px;top:671px;width:11px;height:10px;background:#fff;box-shadow:inset 1px 1px #808080"></div>
<span class="t" style="left:1097.0px;letter-spacing:-0.04px;top:669.75px;font-size:10.7px;line-height:10.7px;color:#fff;">No Related Tasks or EC Were Found !</span>
<svg style="left:1200px;top:380px" width="150" height="130" viewBox="0 0 150 130"><path d="M11.800 10.600L101.900 116.600 126.800 88.600z" fill="#0a9bff"/><circle cx="116" cy="104.200" r="18.400" fill="#0a9bff" stroke="#fff" stroke-width="1.300"/><circle cx="116" cy="104.200" r="19.500" fill="none" stroke="#282828" stroke-width="0.900"/><text x="116.500" y="109.300" text-anchor="middle" font-family="Liberation Serif,serif" font-weight="bold" font-size="15.500" letter-spacing="0.800" fill="#fff">12</text></svg>
<div style="left:1400px;top:0px;width:1px;height:751px;background:#eceef8"></div>
<div style="left:0px;top:751px;width:1401px;height:2px;background:#fff"></div>
</body></html>
